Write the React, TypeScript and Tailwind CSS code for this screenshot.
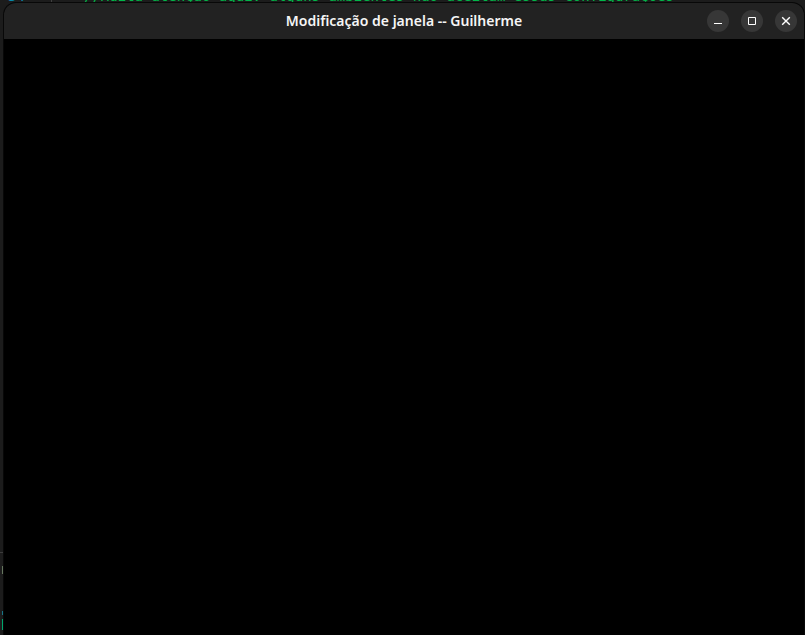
import type { ReactNode } from "react";

function EditorLine() {
  return (
    <div className="-mt-[13px] -mb-[2px] flex h-[18px] shrink-0 whitespace-pre pl-[8px] font-['DejaVu_Sans_Mono',monospace] text-[14px] leading-[18px]">
      <span className="w-[43px] text-[#0789ad]">34</span>
      <span className="h-full w-px bg-[#404040]" />
      <span className="pl-[32px] text-[#00b84a]">
        //Muita atenção aqui: alguns ambientes não aceitam essas configurações
      </span>
    </div>
  );
}

function EditorEdge() {
  return (
    <div className="flex w-[3px] flex-col items-end pt-[549px]">
      <div className="h-px w-full bg-[#3c3c3c]" />
      <div className="mt-[13px] h-[8px] w-px bg-[#66765f]" />
      <div className="mt-[37px] h-[4px] w-px bg-[#197486]" />
      <div className="mt-[4px] h-[11px] w-px bg-[#00a56c]" />
    </div>
  );
}

function WindowButton({ label, children }: { label: string; children: ReactNode }) {
  return (
    <button aria-label={label} className="size-[22px] rounded-full bg-[#373737]">
      <svg viewBox="0 0 22 22" className="size-[22px]" fill="none" stroke="#fff">
        {children}
      </svg>
    </button>
  );
}

export default function App() {
  return (
    <div className="flex h-[635px] w-[805px] flex-col overflow-hidden bg-[#1c1c1c]">
      <EditorLine />
      <div className="relative flex h-[632px] shrink-0">
        <EditorEdge />
        <main className="ml-px w-[800px] rounded-t-[12px] bg-black shadow-[0_0_0_1px_#080808]">
          <header className="grid h-[36px] grid-cols-[1fr_auto_1fr] items-center rounded-t-[12px] bg-[#222222] pr-[7px] pl-[7px]">
            <span />
            <h1 className="whitespace-nowrap font-['Noto_Sans',sans-serif] text-[14px] font-semibold leading-[36px] text-[#f5f5f5]">
              Modificação de janela -- Guilherme
            </h1>
            <div className="flex justify-end gap-[12px]">
              <WindowButton label="Minimizar">
                <path d="M7 13.5h8" />
              </WindowButton>
              <WindowButton label="Maximizar">
                <path d="M7.5 7.5h7v7h-7z" />
              </WindowButton>
              <WindowButton label="Fechar">
                <path d="m7.2 7.2 7.6 7.6m0-7.6-7.6 7.6" strokeWidth="1.4" />
              </WindowButton>
            </div>
          </header>
        </main>
      </div>
    </div>
  );
}
